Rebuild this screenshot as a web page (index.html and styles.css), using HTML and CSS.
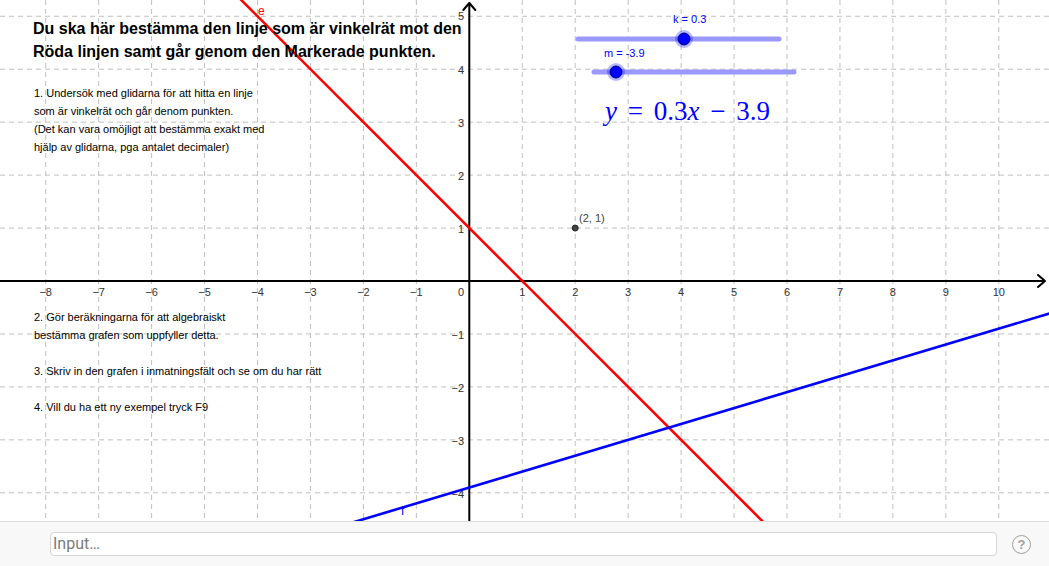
FILE: index.html
```html
<!DOCTYPE html>
<html lang="sv">
<head>
<meta charset="utf-8">
<title>GeoGebra</title>
<link rel="stylesheet" href="styles.css">
</head>
<body>
<div class="app">
  <div class="canvas">
    <svg class="graph" width="1049" height="521" viewBox="0 0 1049 521">
      <g class="grid">
        <line x1="45.7" y1="0" x2="45.7" y2="521"/>
        <line x1="98.65" y1="0" x2="98.65" y2="521"/>
        <line x1="151.6" y1="0" x2="151.6" y2="521"/>
        <line x1="204.55" y1="0" x2="204.55" y2="521"/>
        <line x1="257.5" y1="0" x2="257.5" y2="521"/>
        <line x1="310.45" y1="0" x2="310.45" y2="521"/>
        <line x1="363.4" y1="0" x2="363.4" y2="521"/>
        <line x1="416.35" y1="0" x2="416.35" y2="521"/>
        <line x1="522.25" y1="0" x2="522.25" y2="521"/>
        <line x1="575.2" y1="0" x2="575.2" y2="521"/>
        <line x1="628.15" y1="0" x2="628.15" y2="521"/>
        <line x1="681.1" y1="0" x2="681.1" y2="521"/>
        <line x1="734.05" y1="0" x2="734.05" y2="521"/>
        <line x1="787" y1="0" x2="787" y2="521"/>
        <line x1="839.95" y1="0" x2="839.95" y2="521"/>
        <line x1="892.9" y1="0" x2="892.9" y2="521"/>
        <line x1="945.85" y1="0" x2="945.85" y2="521"/>
        <line x1="998.8" y1="0" x2="998.8" y2="521"/>
        <line x1="0" y1="16.25" x2="1049" y2="16.25"/>
        <line x1="0" y1="69.2" x2="1049" y2="69.2"/>
        <line x1="0" y1="122.15" x2="1049" y2="122.15"/>
        <line x1="0" y1="175.1" x2="1049" y2="175.1"/>
        <line x1="0" y1="228.05" x2="1049" y2="228.05"/>
        <line x1="0" y1="333.95" x2="1049" y2="333.95"/>
        <line x1="0" y1="386.9" x2="1049" y2="386.9"/>
        <line x1="0" y1="439.85" x2="1049" y2="439.85"/>
        <line x1="0" y1="492.8" x2="1049" y2="492.8"/>
      </g>
      <g class="axis">
        <line x1="0" y1="281" x2="1045" y2="281"/>
        <polyline points="1038,275 1045,281 1038,287"/>
        <line x1="469.3" y1="521" x2="469.3" y2="3"/>
        <polyline points="463.3,10 469.3,3 475.3,10"/>
      </g>
      <g class="xlabels">
        <text x="45.7" y="296">−8</text>
        <text x="98.65" y="296">−7</text>
        <text x="151.6" y="296">−6</text>
        <text x="204.55" y="296">−5</text>
        <text x="257.5" y="296">−4</text>
        <text x="310.45" y="296">−3</text>
        <text x="363.4" y="296">−2</text>
        <text x="416.35" y="296">−1</text>
        <text x="522.25" y="296">1</text>
        <text x="575.2" y="296">2</text>
        <text x="628.15" y="296">3</text>
        <text x="681.1" y="296">4</text>
        <text x="734.05" y="296">5</text>
        <text x="787" y="296">6</text>
        <text x="839.95" y="296">7</text>
        <text x="892.9" y="296">8</text>
        <text x="945.85" y="296">9</text>
        <text x="998.8" y="296">10</text>
      </g>
      <g class="ylabels">
        <text x="464" y="296">0</text>
        <text x="464" y="20">5</text>
        <text x="464" y="73.5">4</text>
        <text x="464" y="126.5">3</text>
        <text x="464" y="179.5">2</text>
        <text x="464" y="232.5">1</text>
        <text x="464" y="338.5">−1</text>
        <text x="464" y="391.5">−2</text>
        <text x="464" y="444.5">−3</text>
        <text x="464" y="497.5">−4</text>
      </g>
      <line class="line-e" x1="204.55" y1="-36.7" x2="787" y2="545.75"/>
      <line class="line-f" x1="257.5" y1="551" x2="1104.7" y2="296.9"/>
      <text class="lbl-e" x="258" y="15">e</text>
      <text class="lbl-f" x="401" y="515">f</text>
      <circle class="pt" cx="575.2" cy="228.05" r="3"/>
      <text class="lbl-pt" x="579" y="222">(2, 1)</text>
      <g class="slider">
        <line class="track" x1="578" y1="39" x2="779" y2="39"/>
        <circle class="halo" cx="684" cy="39" r="9"/>
        <circle class="knob" cx="684" cy="39" r="6"/>
        <text class="slabel" x="673" y="23">k = 0.3</text>
      </g>
      <g class="slider">
        <line class="track" x1="594" y1="72" x2="794" y2="72"/>
        <circle class="halo" cx="616" cy="72" r="9"/>
        <circle class="knob" cx="616" cy="72" r="6"/>
        <text class="slabel" x="604" y="57">m = -3.9</text>
      </g>
      <text class="eq" x="605" y="120"><tspan class="it">y</tspan> = 0.3<tspan class="it">x</tspan> − 3.9</text>
    </svg>
    <div class="title">Du ska här bestämma den linje som är vinkelrät mot den<br>Röda linjen samt går genom den Markerade punkten.</div>
    <div class="note note1">1. Undersök med glidarna för att hitta en linje<br>som är vinkelrät och går denom punkten.<br>(Det kan vara omöjligt att bestämma exakt med<br>hjälp av glidarna, pga antalet decimaler)</div>
    <div class="note note2">2. Gör beräkningarna för att algebraiskt<br>bestämma grafen som uppfyller detta.<br><br>3. Skriv in den grafen i inmatningsfält och se om du har rätt<br><br>4. Vill du ha ett ny exempel tryck F9</div>
  </div>
  <div class="inputbar">
    <div class="inputbox">Input…</div>
    <div class="help">?</div>
  </div>
</div>
</body>
</html>
```
FILE: styles.css
```css
html, body {
  margin: 0;
  padding: 0;
  background: #ffffff;
}
.app {
  width: 1049px;
  height: 566px;
  display: flex;
  flex-direction: column;
  overflow: hidden;
  font-family: "Liberation Sans", Arial, sans-serif;
}
.canvas {
  position: relative;
  height: 521px;
  flex: none;
  overflow: hidden;
  background: #ffffff;
}
.graph {
  position: absolute;
  left: 0;
  top: 0;
  display: block;
}
.grid line {
  stroke: #c0c0c0;
  stroke-width: 1;
  stroke-dasharray: 5 4;
}
.axis line {
  stroke: #000;
  stroke-width: 2;
}
.axis polyline {
  fill: none;
  stroke: #000;
  stroke-width: 2;
  stroke-linecap: round;
  stroke-linejoin: round;
}
.xlabels text, .ylabels text {
  font-family: "Liberation Sans", Arial, sans-serif;
  font-size: 11px;
  fill: #333;
}
.xlabels text {
  text-anchor: middle;
}
.ylabels text {
  text-anchor: end;
}
.line-e {
  stroke: #ff0000;
  stroke-width: 2.6;
}
.line-f {
  stroke: #0000ff;
  stroke-width: 2.6;
}
.lbl-e {
  font-family: "Liberation Sans", Arial, sans-serif;
  font-size: 12px;
  fill: #ff0000;
}
.lbl-f {
  font-family: "Liberation Sans", Arial, sans-serif;
  font-size: 12px;
  fill: #0000ff;
}
.pt {
  fill: #444;
  stroke: #222;
  stroke-width: 1;
}
.lbl-pt {
  font-family: "Liberation Sans", Arial, sans-serif;
  font-size: 11px;
  fill: #444;
}
.track {
  stroke: #9999ff;
  stroke-width: 5;
  stroke-linecap: round;
}
.halo {
  fill: rgba(0, 0, 255, 0.28);
}
.knob {
  fill: #0000ff;
  stroke: #00007a;
  stroke-width: 1;
}
.slabel {
  font-family: "Liberation Sans", Arial, sans-serif;
  font-size: 11px;
  fill: #0000ff;
}
.eq {
  font-family: "Liberation Serif", "DejaVu Serif", serif;
  font-size: 27px;
  word-spacing: 4px;
  fill: #0000ff;
}
.eq .it {
  font-style: italic;
}
.title {
  position: absolute;
  left: 33px;
  top: 17px;
  font-size: 16px;
  font-weight: bold;
  line-height: 23px;
  color: #000;
  white-space: nowrap;
}
.note {
  position: absolute;
  left: 34px;
  font-size: 11px;
  line-height: 18px;
  color: #000;
  white-space: nowrap;
}
.note1 {
  top: 84px;
}
.note2 {
  top: 308px;
}
.inputbar {
  flex: 1;
  display: flex;
  align-items: center;
  gap: 15px;
  padding: 0 18px 0 50px;
  background: #f8f8f8;
  border-top: 1px solid #dcdcdc;
}
.inputbox {
  flex: 1;
  height: 22px;
  line-height: 22px;
  padding-left: 2px;
  background: #fff;
  border: 1px solid #d6d6d6;
  border-radius: 4px;
  color: #7a7a7a;
  font-family: Roboto, "Liberation Sans", sans-serif;
  font-size: 16px;
}
.help {
  width: 17px;
  height: 17px;
  border: 1.5px solid #a0a0a0;
  border-radius: 50%;
  color: #a0a0a0;
  font-family: "Liberation Sans", Arial, sans-serif;
  font-size: 13px;
  font-weight: bold;
  line-height: 17px;
  text-align: center;
}
```
